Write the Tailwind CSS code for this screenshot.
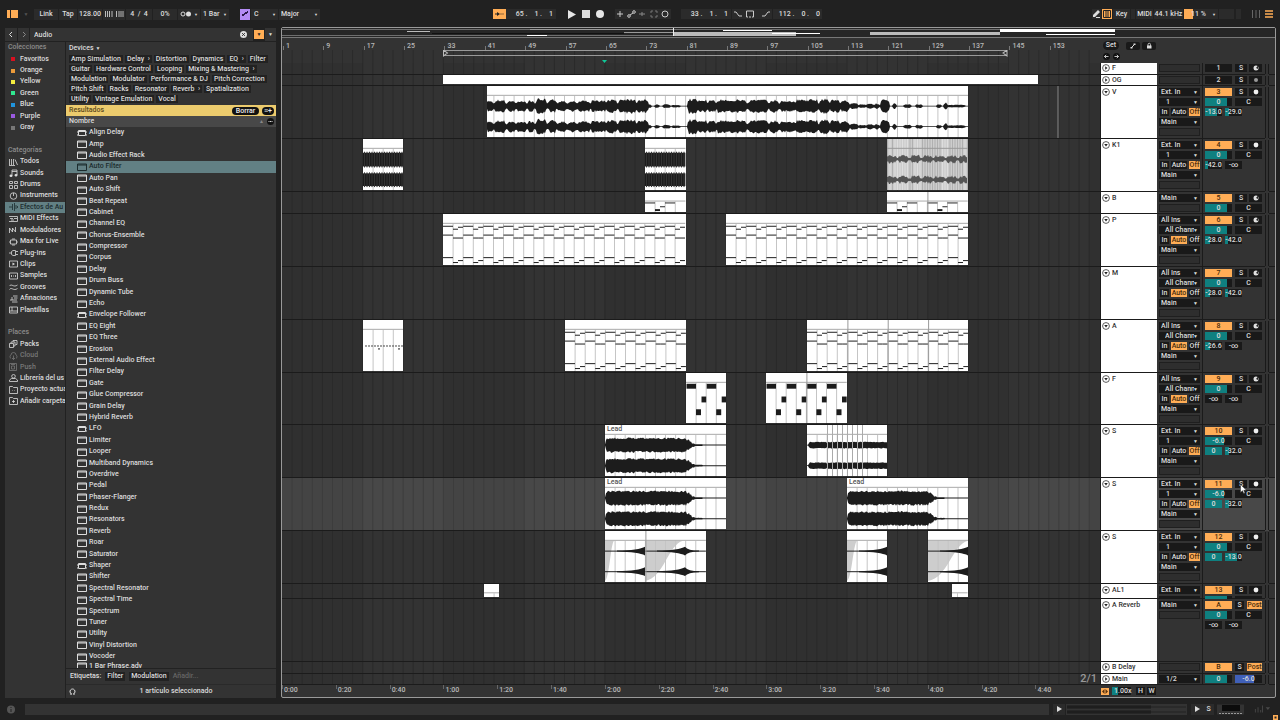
<!DOCTYPE html>
<html lang="es">
<head>
    <meta charset="UTF-8">
    <meta name="viewport" content="width=device-width, initial-scale=1.0">
    <title>Arrangement</title>
    <script src="https://cdn.jsdelivr.net/npm/@tailwindcss/browser@4"></script>
</head>
<body class="h-screen min-h-[720px] flex flex-col overflow-hidden bg-[#212121] text-[#dcdcdc] font-['Roboto','Noto_Sans',sans-serif] text-[7px] leading-[9px] font-medium cursor-default">

    <!-- Barra de control -->
    <header class="flex items-center h-7 shrink-0 pl-[7px] pr-[7px] whitespace-nowrap">
        <div class="flex items-center w-[486px] shrink-0">
            <button aria-label="Ocultar navegador" class="flex gap-px w-[11px] h-2"><span class="w-[3px] h-2 bg-[#ffad56]"></span><span class="flex-1 h-2 bg-[#ffad56]"></span></button>
            <span class="w-4 text-center text-[5px] text-[#555]">▼</span>
            <button class="w-[24px] h-[11px] bg-[#2b2b2b]">Link</button>
            <button class="w-[18px] h-[11px] ml-px bg-[#2b2b2b]">Tap</button>
            <input aria-label="Tempo" value="128.00" class="w-[24px] h-[11px] ml-px bg-[#2b2b2b] text-center">
            <button aria-label="Nudge" class="w-[22px] h-[11px] ml-px bg-[#2b2b2b] flex items-center justify-center">
                <svg class="w-5 h-2" viewBox="0 0 20 8" stroke="#bbb" stroke-width="1"><path d="M1.500 1v6M3.500 1v6M5.500 1v6M8 1v6M12.500 1v6M15 1v6M17 1v6M19 1v6"/></svg>
            </button>
            <input aria-label="Compás" value="4  /  4" class="w-[26px] h-[11px] ml-px bg-[#2b2b2b] text-center">
            <input aria-label="Groove" value="0%" class="w-[24px] h-[11px] ml-px bg-[#2b2b2b] text-center">
            <button aria-label="Metrónomo" class="w-[22px] h-[11px] ml-px bg-[#2b2b2b] flex items-center justify-between px-[2px]">
                <svg class="w-3 h-2" viewBox="0 0 12 8"><circle cx="3" cy="4" r="2" fill="none" stroke="#ddd"/><circle cx="8.500" cy="4" r="2.500" fill="#ddd"/></svg>
                <span class="text-[4px]">▼</span>
            </button>
            <label class="relative ml-px bg-[#2b2b2b] flex items-center h-[11px] w-[28px]">
                <select aria-label="Cuantización" class="appearance-none w-full pl-[2px]"><option>1 Bar</option></select>
                <span class="absolute right-[2px] text-[4px] pointer-events-none">▼</span>
            </label>
            <button aria-label="Escala" class="w-[10px] h-[11px] ml-[11px] bg-[#b48cf5] flex items-center justify-center">
                <svg class="w-2 h-2" viewBox="0 0 8 8" fill="#2a1a4a"><path d="M1 4h2v2H1zM3 3h1v2H3zM4 2h2v2H4zM6 1h1v2H6z"/></svg>
            </button>
            <label class="relative bg-[#2b2b2b] flex items-center h-[11px] w-[27px] ml-px">
                <select aria-label="Nota raíz" class="appearance-none w-full pl-[3px]"><option>C</option></select>
                <span class="absolute right-[2px] text-[4px] pointer-events-none">▼</span>
            </label>
            <label class="relative bg-[#2b2b2b] flex items-center h-[11px] w-[41px] ml-px">
                <select aria-label="Nombre de escala" class="appearance-none w-full pl-[2px]"><option>Major</option></select>
                <span class="absolute right-[2px] text-[4px] pointer-events-none">▼</span>
            </label>
        </div>

        <div class="flex items-center">
            <button aria-label="Seguir" class="w-[13px] h-[10px] bg-[#ffad56] flex items-center justify-center">
                <svg class="w-[9px] h-[6px]" viewBox="0 0 9 6" fill="#222"><path d="M0 2.500h2V1l3 2-3 2V3.500H0zM5.500 2.500h1v1h-1zM7.500 2.500h1v1h-1z"/></svg>
            </button>
            <input aria-label="Posición" value="65 .    1 .    1" class="w-[50px] h-[10px] bg-[#2b2b2b] text-right pr-[3px]">
            <button aria-label="Reproducir" class="ml-[12px]"><svg class="w-2 h-[9px]" viewBox="0 0 8 9" fill="#e6e6e6"><path d="M0 0l8 4.500L0 9z"/></svg></button>
            <button aria-label="Detener" class="ml-[6px] w-2 h-2 bg-[#dcdcdc]"></button>
            <button aria-label="Grabar" class="ml-[6px] w-2 h-2 rounded-full bg-[#e6e6e6]"></button>
            <button aria-label="Overdub y automatización" class="ml-[11px]">
                <svg class="w-[56px] h-[10px] bg-[#2b2b2b]" viewBox="0 0 56 10" fill="none" stroke="#ccc" stroke-width="1">
                    <path d="M2 5h6M5 2v6"/><circle cx="14" cy="7" r="1.300"/><circle cx="19" cy="3" r="1.300"/><path d="M15 6l3-2"/>
                    <path stroke="#888" d="M24 5h6M27 3v4"/><path stroke="#777" d="M36 4V2h2M40 2h2v2M42 6v2h-2M38 8h-2V6"/><circle cx="50" cy="5" r="3"/>
                </svg>
            </button>
            <input aria-label="Inicio de bucle" value="33 .    1 .    1" class="ml-[10px] w-[50px] h-[10px] bg-[#2b2b2b] text-right pr-[3px]">
            <button aria-label="Bucle" class="ml-px">
                <svg class="w-10 h-[10px] bg-[#2b2b2b]" viewBox="0 0 40 10" fill="none" stroke="#ccc" stroke-width="1">
                    <path d="M2 3h2l3 4h3M16 8h-1.500V2h7v6H20M17 8h2M30 7h3l3-4h2"/>
                </svg>
            </button>
            <input aria-label="Duración de bucle" value="112 .    0 .    0" class="ml-px w-[49px] h-[10px] bg-[#2b2b2b] text-right pr-[2px]">
        </div>

        <div class="flex items-center ml-auto">
            <button aria-label="Modo dibujo" class="w-[9px] h-[10px] bg-[#2b2b2b]"><svg class="w-[9px] h-[10px]" viewBox="0 0 9 10" fill="#ddd"><path d="M1 6l4-4 2 2-4 4H1zM6 1l2 2-1 1-2-2zM4 8h4v1H4z"/></svg></button>
            <button aria-label="Teclado MIDI" class="ml-px w-[10px] h-[10px] bg-[#ffad56] flex items-center justify-center">
                <svg class="w-2 h-2" viewBox="0 0 8 8" stroke="#222" fill="none"><path d="M.5.500h7v7h-7zM3 1v6M5 1v6"/></svg>
            </button>
            <button class="w-[17px] h-[10px] ml-px bg-[#2b2b2b]">Key</button>
            <span class="w-[4px] h-[10px] ml-px bg-[#2b2b2b]"></span>
            <button class="w-[17px] h-[10px] ml-px bg-[#2b2b2b]">MIDI</button>
            <button class="w-[29px] h-[10px] ml-px bg-[#2b2b2b]">44.1 kHz</button>
            <button class="w-[34px] h-[10px] ml-px bg-[#2b2b2b] flex items-center"><span class="w-[9px] h-[10px] bg-[#ffad56] shrink-0"></span><span class="-ml-[2px]">11 %</span><span class="text-[4px] ml-auto mr-[2px]">▼</span></button>
            <span class="w-[15px] h-[10px] ml-px bg-[#2b2b2b]"></span>
            <span class="w-[5px] h-[10px] ml-[2px] bg-[#2b2b2b]"></span>
            <svg class="w-2 h-2 ml-[11px]" viewBox="0 0 8 8" stroke="#666"><path d="M.5 0v8M4 0v8M7.500 0v8"/></svg>
            <button aria-label="Menú" class="ml-[5px]"><svg class="w-2 h-2" viewBox="0 0 8 8" stroke="#ffad56" stroke-width="1.400"><path d="M0 1h8M0 4h8M0 7h8"/></svg></button>
        </div>
    </header>

    <main class="flex flex-1 min-h-0 pl-[5px] pr-[4px]">
        <!-- Navegador -->
        <section class="w-[271px] shrink-0 flex flex-col">
            <div class="flex items-center h-[13px] gap-px shrink-0">
                <button aria-label="Atrás" class="w-3 h-[13px] bg-[#333]"><svg class="w-3 h-[7px]" viewBox="0 0 12 7" fill="none" stroke="#ddd"><path d="M7 1L4.500 3.500 7 6"/></svg></button>
                <button aria-label="Adelante" class="w-[11px] h-[13px] bg-[#333]"><svg class="w-3 h-[7px]" viewBox="0 0 12 7" fill="none" stroke="#888"><path d="M5 1l2.500 2.500L5 6"/></svg></button>
                <input aria-label="Buscar" value="Audio" class="flex-1 min-w-0 h-[13px] bg-[#333] pl-[4px]">
                <button aria-label="Borrar búsqueda" class="w-[13px] h-[13px] bg-[#333] -ml-px"><svg class="w-[7px] h-[7px]" viewBox="0 0 7 7"><circle cx="3.500" cy="3.500" r="3.500" fill="#ddd"/><path d="M2.200 2.200l2.600 2.600M4.800 2.200L2.200 4.800" stroke="#222"/></svg></button>
                <button aria-label="Filtro" class="w-[10px] h-[9px] bg-[#ffad56] text-[5px] leading-[9px] text-[#222]">▼</button>
                <button aria-label="Más filtros" class="w-[11px] h-[13px] bg-[#333] text-[5px]">▼</button>
            </div>
            <div class="flex flex-1 min-h-0 gap-px mt-px">
                <nav id="sidebar" class="w-[60px] shrink-0 bg-[#333] overflow-hidden"></nav>
                <div class="flex-1 min-w-0 flex flex-col bg-[#333]">
                    <div class="h-[63px] shrink-0 pt-px">
                        <button class="pl-[3px] h-[10px] flex items-center gap-[2px]">Devices <span class="text-[5px]">▼</span></button>
                        <div id="tags" class="pl-[3px] mt-[2px] flex flex-col gap-[2px]"></div>
                    </div>
                    <div class="h-[11px] shrink-0 flex items-center bg-[#eccb6d] text-[#5b4a1c] pl-[3px] pr-[2px]">
                        Resultados
                        <button class="ml-auto h-2 w-[27px] rounded-full bg-[#111] text-[#eee] leading-[8px]">Borrar</button>
                        <button aria-label="Añadir etiqueta" class="ml-[3px] h-2 w-3 rounded-full bg-[#111] text-[#eee] leading-[8px]">≡+</button>
                    </div>
                    <div class="h-[11px] shrink-0 flex items-center bg-[#484848] pl-[3px] pr-[2px]">
                        Nombre <span class="ml-auto mr-[3px] text-[5px] text-[#888]">▲</span>
                        <button aria-label="Columnas" class="w-[7px] h-[7px] rounded-full bg-[#111]"><svg class="w-[7px] h-[7px]" viewBox="0 0 7 7" fill="#ddd"><path d="M1.500 3h1v1h-1zM3 3h1v1H3zM4.500 3h1v1h-1z"/></svg></button>
                    </div>
                    <ul id="devices" class="flex-1 min-h-0 flex flex-col overflow-hidden"></ul>
                    <div class="h-[16px] shrink-0 flex items-center gap-[4px] pl-[4px] border-t border-[#222]">
                        Etiquetas: <button class="bg-[#222] px-[2px]">Filter</button><button class="bg-[#222] px-[2px]">Modulation</button><span class="text-[#666]">Añadir...</span>
                    </div>
                    <div class="h-[14px] shrink-0 flex items-center pl-[3px] border-t border-[#2a2a2a]">
                        <svg class="w-[7px] h-[7px]" viewBox="0 0 7 7" fill="none" stroke="#ddd"><path d="M2.500 5.800A2.500 2.500 0 1 1 4.500 5.800M1 6h2M4 6h2"/></svg>
                        <span class="flex-1 text-center">1 artículo seleccionado</span>
                    </div>
                </div>
            </div>
        </section>

        <!-- Arreglo -->
        <section class="flex-1 min-w-0 ml-[5px] -mt-px flex flex-col bg-[#333] border border-[#9a9a9a] rounded-[2px]">
            <svg class="w-full h-[10px] shrink-0 bg-[#262626] border-b border-[#777]" viewBox="0 0 993 9" preserveAspectRatio="none" shape-rendering="crispEdges">
                <path fill="#6e6e6e" d="M0 1h838v1H0zM0 7h391v1H0zM838 1h80v1H838z"/>
                <path fill="#111" d="M150 5h192v1H150z"/>
                <path fill="#999" d="M248 1h143v1H248zM342 4h49v1H342z"/>
                <path fill="#bbb" d="M391 4h123v4H391zM125 3h23v1H125zM588 4h130v3H588z"/>
                <path fill="#fff" d="M441 2h49v1h-49zM490 5h48v1H490zM245 7h20v1H245zM718 1h115v3H718zM764 6h69v1H764z"/>
                <path fill="#eee" d="M391 0h1v8h-1z"/>
            </svg>
            <div class="flex shrink-0 h-[25px]">
                <div class="flex-1 min-w-0 overflow-hidden">
                    <div id="barRuler" class="flex h-[12px] items-end overflow-hidden"></div>
                    <svg id="brace" class="block w-full h-[13px]"></svg>
                </div>
                <div class="w-[175px] shrink-0 flex flex-col gap-[3px] pt-[3px] pl-[3px]">
                    <div class="flex items-center">
                        <button class="w-[16px] h-[9px] rounded-full bg-[#191919]">Set</button>
                        <button aria-label="Automatización" class="ml-[7px] w-[14px] h-2 rounded-[2px] bg-[#191919]"><svg class="w-[14px] h-2" viewBox="0 0 14 8" stroke="#ddd"><path d="M5.500 5.500l3-3"/><path d="M4.500 5h2v1.500h-2zM7.500 1.500h2V3h-2z" fill="#ddd" stroke="none"/></svg></button>
                        <button aria-label="Bloquear envolventes" class="ml-[2px] w-[14px] h-2 rounded-[2px] bg-[#191919]"><svg class="w-[14px] h-2" viewBox="0 0 14 8" fill="#ddd"><path d="M5 3.500h4.500v3H5z"/><path d="M6 4V2.500a1.200 1.200 0 0 1 2.500 0V4" fill="none" stroke="#ddd" stroke-width=".8"/></svg></button>
                    </div>
                    <div class="flex gap-[3px]">
                        <button aria-label="Anterior" class="w-[7px] h-[7px] rounded-full bg-[#111]"><svg class="w-[7px] h-[7px]" viewBox="0 0 7 7" fill="none" stroke="#eee" stroke-width=".8"><path d="M5.500 3.500h-4M3.200 1.800L1.500 3.500l1.700 1.700"/></svg></button>
                        <button aria-label="Siguiente" class="w-[7px] h-[7px] rounded-full bg-[#111]"><svg class="w-[7px] h-[7px]" viewBox="0 0 7 7" fill="none" stroke="#eee" stroke-width=".8"><path d="M1.500 3.500h4M3.800 1.800l1.700 1.700-1.700 1.700"/></svg></button>
                    </div>
                </div>
            </div>
            <div id="tracks" class="flex-1 min-h-0 flex flex-col"></div>
            <div class="flex h-[12px] shrink-0">
                <div id="timeRuler" class="flex-1 min-w-0 flex overflow-hidden"></div>
                <div class="w-[175px] shrink-0 flex items-center gap-[3px] pl-px">
                    <button aria-label="Centrar" class="w-2 h-[7px] bg-[#ffad56]"><svg class="w-2 h-[7px]" viewBox="0 0 8 7" fill="#5a3510"><path d="M1 3.500L3.500 1v5zM7 3.500L4.500 1v5z"/></svg></button>
                    <span class="w-[19px] h-[8px] leading-[8px] bg-[linear-gradient(90deg,#0f8080_6px,#191919_6px)] pl-[2px]">1.00x</span>
                    <button class="ml-[2px] w-[9px] h-2 leading-[8px] bg-[#191919]">H</button>
                    <button class="-ml-px w-[9px] h-2 leading-[8px] bg-[#191919]">W</button>
                </div>
            </div>
        </section>
    </main>

    <!-- Barra de estado -->
    <footer class="flex items-center h-[22px] shrink-0 pl-[7px] pr-[2px]">
        <svg class="w-2 h-[9px]" viewBox="0 0 8 9"><circle cx="4" cy="4.500" r="4" fill="#555"/><path d="M4 2v1M4 4v3" stroke="#222"/></svg>
        <div class="flex-1 h-[11px] ml-[10px] bg-[#333]"></div>
        <button aria-label="Vista de clip" class="ml-[4px] w-3 h-[11px] bg-[#2b2b2b]"><svg class="w-3 h-[6px]" viewBox="0 0 12 6" fill="#ddd"><path d="M4 0l5 3-5 3z"/></svg></button>
        <svg class="ml-px w-[121px] h-[11px] bg-[#333]" viewBox="0 0 121 11"><path d="M1 3h84M1 8h84" stroke="#1a1a1a" stroke-width="3"/><path d="M1 3h119M1 8h119" stroke="#222"/></svg>
        <button aria-label="Vista de dispositivo" class="ml-[4px] w-3 h-[11px] bg-[#2b2b2b]"><svg class="w-3 h-[6px]" viewBox="0 0 12 6" fill="#ddd"><path d="M4 0l5 3-5 3z"/></svg></button>
        <span class="w-[11px] h-[11px] bg-[#2b2b2b] text-center leading-[11px]">S</span>
        <svg class="ml-[3px] w-7 h-[11px]" viewBox="0 0 28 11"><path d="M0 .5h27v10H0z" fill="#333"/><path d="M5 1h18v6H5z" fill="#0c0c0c"/><path d="M2 9.500h24" stroke="#999" stroke-dasharray="2 1"/></svg>
        <svg class="ml-[9px] w-[17px] h-[8px]" viewBox="0 0 19 8" fill="#484848"><path d="M1 4h1v4H1zM4 2h1v6H4zM7 5h1v3H7zM9 0h1v8H9zM13 2h5l-2.500 3z"/></svg>
        <svg class="ml-[2px] w-[5px] h-[5px] self-end" viewBox="0 0 5 5"><path d="M0 0h5v5H0z" fill="#ffad56"/><path d="M1.500 1.500h2v2h-2z" fill="#222"/></svg>
    </footer>

    <!-- Puntero -->
    <svg class="fixed left-[1240px] top-[484px] w-[7px] h-[10px]" viewBox="0 0 7 10"><path d="M.5.500v8l2-1.800 1.200 2.800 1.300-.6-1.200-2.600h2.700z" fill="#fff" stroke="#222" stroke-width=".5"/></svg>

    <script>
        const BARS = 162.14      // compases visibles
        const PX = 5.045         // unidades de dibujo por compás
        const pct = bars => (bars / BARS * 100) + '%'

        // ---------- Navegador ----------
        const colors = [['Favoritos', '#d81020'], ['Orange', '#ea9a3a'], ['Yellow', '#f5ee40'], ['Green', '#30e890'], ['Blue', '#2094dc'], ['Purple', '#9a5ae0'], ['Gray', '#777']]
        const icons = {
            Todos: '<path d="M.5 1v6M2.500 1v6M4.500 1v6M6 1.500L8.500 7M0 7.500h6"/>',
            Sounds: '<path d="M3 6.500V1h5v5M3 2.500h5"/><path fill="currentColor" d="M1 6h2v1.500H1zM6 5.500h2V7H6z"/>',
            Drums: '<path d="M.5.500h3v2h-3zM5.500.500h3v2h-3zM.5 4.500h3v3h-3zM5.500 4.500h3v3h-3z"/>',
            Instruments: '<circle cx="4.500" cy="4" r="3.300"/><path d="M4.500 1v3"/>',
            'Efectos de Au': '<path d="M0 4h1M2 3v2M3.500 1v6M5.500 0v8M7 2v4M8.500 3v2"/>',
            'MIDI Effects': '<path d="M0 1.500h8.500v5H0M1 3.500h3M5 3.500h3M2 5h3"/>',
            Moduladores: '<path d="M.5 7V2l3 4V2l3 4V1"/>',
            'Max for Live': '<path d="M1.500 2h6v4h-6zM0 4h1M8 4h1M3 1h3M3 7h3"/>',
            'Plug-Ins': '<path d="M0 4h2M2.500 2.500L4 1.500h2.500v5H4L2.500 5.500zM7 2.500h2M7 5.500h2"/>',
            Clips: '<path d="M.5 1h8v6h-8z"/><path fill="currentColor" stroke="none" d="M3.500 2.500L6 4 3.500 5.500z"/>',
            Samples: '<path d="M.5 1h8v6h-8zM2.500 3v2M4 4h1M6.500 3v2"/>',
            Grooves: '<path d="M.5 3c2-3 4 2 8-1M.5 6.500c2-3 4 2 8-1"/>',
            Afinaciones: '<path d="M4 1h4.500M5 3h3.500M1 5h3M4 5h4M3 7h5.500M3 2v3"/>',
            Plantillas: '<path d="M.5 1h8v6h-8zM.5 5h8M3 1v4"/>',
            Packs: '<path d="M.5 3.500h4v4h-4zM2 3V2h4v4H5M4 2V.5h4v4H6.500"/>',
            Cloud: '<path d="M2 6.500a2 2 0 0 1 0-3.500 2.500 2.500 0 0 1 5 0 2 2 0 0 1 0 3.500M4.500 3.500v4M3 6l1.500 1.500L6 6"/>',
            Push: '<path d="M.5.500h7v7h-7zM2.500 3h3v3h-3zM2 1.500h4"/>',
            'Librería del us': '<circle cx="4.500" cy="2.300" r="1.800"/><path d="M.5 7.500V6l2-1.500h4l2 1.500v1.500z"/>',
            'Proyecto actua': '<path d="M.5 7.500v-7h3l1 1h4v6zM3 4.500h.5M5.500 4.500H6"/>',
            'Añadir carpeta': '<path d="M.5 7.500v-7h3l1 1h4v6zM3 4.500h3M4.500 3v3"/>'
        }
        const heading = t => `<div class="text-[#8c8c8c] pl-[3px] flex items-center">${t}</div>`
        const place = t => {
            const active = t === 'Efectos de Au'
            const dim = t === 'Cloud' || t === 'Push'
            const tone = active ? 'bg-[#628084] text-[#1c2c2e]' : dim ? 'text-[#777]' : 'text-[#dcdcdc]'
            return `<a href="#" class="flex items-center pl-[4px] pr-[4px] whitespace-nowrap ${tone}"><svg class="w-[9px] h-2 shrink-0" viewBox="0 0 9 8" fill="none" stroke="currentColor" stroke-width=".8">${icons[t]}</svg><span class="ml-[2px] overflow-hidden">${t}</span></a>`
        }
        const names = Object.keys(icons)
        document.getElementById('sidebar').innerHTML = '<div class="grid auto-rows-fr h-[365px]">' +
            heading('Colecciones') +
            colors.map(([t, c]) => `<a href="#" class="flex items-center pl-[6px]"><span class="w-1 h-1" style="background:${c}"></span><span class="ml-[5px]">${t}</span></a>`).join('') +
            '<div></div>' + heading('Categorías') + names.slice(0, 14).map(place).join('') +
            '<div></div>' + heading('Places') + names.slice(14).map(place).join('') + '</div>'

        const tags = [
            ['Amp Simulation', 'Delay  ›', 'Distortion', 'Dynamics', 'EQ  ›', 'Filter'],
            ['Guitar', 'Hardware Control', 'Looping', 'Mixing &amp; Mastering  ›'],
            ['Modulation', 'Modulator', 'Performance &amp; DJ', 'Pitch Correction'],
            ['Pitch Shift', 'Racks', 'Resonator', 'Reverb  ›', 'Spatialization'],
            ['Utility', 'Vintage Emulation', 'Vocal']
        ]
        document.getElementById('tags').innerHTML = tags.map(r => '<div class="flex gap-[2px] h-2">' +
            r.map(t => `<button class="bg-[#222] px-[2px] leading-[8px] whitespace-pre">${t}</button>`).join('') + '</div>').join('')

        const devices = ['Align Delay', 'Amp', 'Audio Effect Rack', 'Auto Filter', 'Auto Pan', 'Auto Shift', 'Beat Repeat', 'Cabinet', 'Channel EQ', 'Chorus-Ensemble', 'Compressor', 'Corpus', 'Delay', 'Drum Buss', 'Dynamic Tube', 'Echo', 'Envelope Follower', 'EQ Eight', 'EQ Three', 'Erosion', 'External Audio Effect', 'Filter Delay', 'Gate', 'Glue Compressor', 'Grain Delay', 'Hybrid Reverb', 'LFO', 'Limiter', 'Looper', 'Multiband Dynamics', 'Overdrive', 'Pedal', 'Phaser-Flanger', 'Redux', 'Resonators', 'Reverb', 'Roar', 'Saturator', 'Shaper', 'Shifter', 'Spectral Resonator', 'Spectral Time', 'Spectrum', 'Tuner', 'Utility', 'Vinyl Distortion', 'Vocoder', '1 Bar Phrase.adv']
        const maxDevices = ['Align Delay', 'Envelope Follower', 'LFO', 'Shaper']
        document.getElementById('devices').innerHTML = devices.map((t, i) => {
            const tone = t === 'Auto Filter' ? 'bg-[#628084] text-[#1c2c2e]' : 'text-[#dcdcdc]'
            const size = i === devices.length - 1 ? 'h-[6px] shrink-0 items-start' : 'flex-1 min-h-0 items-center'
            const icon = maxDevices.includes(t)
                ? '<path d="M1.500 1.500h7v5h-7zM1 2.500h8M0 3h1M9 3h1M0 6h1M9 6h1"/>'
                : '<path d="M.5 1h9v6.500h-9zM.5 2h9"/>'
            return `<li class="flex pl-[11px] overflow-hidden whitespace-nowrap ${size} ${tone}"><svg class="w-[10px] h-2 shrink-0" viewBox="0 0 10 8" fill="none" stroke="currentColor">${icon}</svg><span class="ml-[2px]">${t}</span></li>`
        }).join('')

        // ---------- Reglas ----------
        let ruler = ''
        for (let b = 1; b < 160; b += 8) ruler += `<span class="shrink-0 h-[9px] pl-px flex items-end gap-[2px] leading-[8px] text-[#b8b8b8]" style="width:${pct(8)}"><i class="w-px h-[4px] bg-[#777]"></i>${b < 154 ? b : ''}</span>`
        document.getElementById('barRuler').innerHTML = ruler

        const W = BARS * PX
        const gridLines = (from, to, h, color, y = 0) => {
            let d = ''
            for (let b = Math.ceil((from - 1) / 2) * 2 + 1; b < to; b += 2) if (b > from) d += `M${((b - from) * PX).toFixed(1)} ${y}V${h}`
            return `<path d="${d}" stroke="${color}"/>`
        }
        const shade = (h, color) => {
            let s = ''
            for (let b = 1; b < BARS; b += 32) s += `<rect x="${(b - 1) * PX}" width="${16 * PX}" height="${h}" fill="${color}"/>`
            return s
        }
        const brace = document.getElementById('brace')
        brace.setAttribute('viewBox', `0 0 ${W} 13`)
        brace.setAttribute('preserveAspectRatio', 'none')
        brace.innerHTML = gridLines(1, BARS, 13, '#2b2b2b') +
            '<path d="M161 .5h564M161 5.500h564" stroke="#999"/><path d="M161.500 0v6l4-3zM725 0v6l-4-3z" fill="#333" stroke="#bbb"/><path d="M320 10h5l-2.500 3z" fill="#10c898"/>'

        let times = ''
        for (let s = 0; s <= 280; s += 20) times += `<span class="shrink-0 border-l border-[#666] h-1 pl-px text-[#b8b8b8] leading-[10px]" style="width:${pct(32 / 3)}">${Math.floor(s / 60)}:${String(s % 60).padStart(2, '0')}</span>`
        document.getElementById('timeRuler').innerHTML = times

        // ---------- Formas de onda ----------
        let seed = 7
        const rnd = () => (seed = (seed * 16807) % 2147483647) / 2147483647
        // segs: [inicio, fin, amplitud, sin suavizar] en unidades de dibujo
        function wave(w, segs, centers, color = '#1c1c1c', base = 0.4, jitter = 0.35) {
            const up = [], down = []
            for (let x = 0; x <= w; x += 1) {
                const s = segs.find(s => x >= s[0] && x <= s[1])
                let a = base, b = base
                if (s) {
                    const edge = s[3] ? 1 : Math.min(1, (Math.min(x - s[0], s[1] - x) + 2) / 3)
                    a = s[2] * edge * (1 - jitter * rnd())
                    b = s[2] * edge * (1 - jitter * rnd())
                }
                up.push([x, a]); down.unshift([x, b])
            }
            return centers.map(c => `<path fill="${color}" d="M${up.map(p => p[0] + ' ' + (c + .5 - p[1]).toFixed(1)).join('L')}L${down.map(p => p[0] + ' ' + (c + .5 + p[1]).toFixed(1)).join('L')}z"/>`).join('')
        }
        const vocals = [[487,493,6],[495,505,7],[508,515,6],[517,526,6],[528,534,6],[536,546,8],[549,556,7],[558,566,6],[569,576,6],[578,590,6],[591,606,6],[607,617,7],[619,636,8],[637,648,7],[648,651,2],[655,659,2],[663,670,2],[672,680,1.5],[688,697,8],[698,707,7],[708,716,6],[717,746,7],[749,768,7],[770,778,7],[780,795,6],[796,818,7],[820,829,8],[830,840,7],[841,849,6],[850,858,3],[859,866,2],[867,873,3],[875,879,3],[881,889,7],[893,896,3],[904,911,2],[916,922,2],[937,941,2],[944,947,4],[948,965,1.5],[487,648,3.5,1],[688,849,3.5,1],[849,881,1.5,1]].map(s => [s[0] - 487, s[1] - 487, s[2], s[3]])
        const lead = w => wave(w, [[1, 82, 7.8], [83, 84, 6, 1], [85, 86, 4, 1], [87, 89, 2, 1], [90, 97, 1, 1]], [20, 41], '#1c1c1c', 0.5, 0.25)
        const rect = (x, y, w, h, c = '#1c1c1c') => `<rect x="${x.toFixed(1)}" y="${y}" width="${w.toFixed(1)}" height="${h}" fill="${c}"/>`

        function spikes(w) {
            let s = rect(0, 14, w, 14) + rect(0, 35, w, 13)
            for (let x = 1; x < w; x += 2.5) s += rect(x, 13, 1, 16, '#333') + rect(x, 34, 1, 15, '#333')
            return s
        }
        function chords(w) {
            let s = ''
            for (let x = 0; x < w - 1; x += 4 * PX) s += [[0,12,10],[0,21,10],[0,44,10],[10,15,5],[10,24,5],[10,49,5],[15,13,5],[15,24,5],[15,47,5]].map(n => rect(x + n[0], n[1], n[2], 1)).join('')
            return s
        }
        function bass(w) {
            let s = ''
            for (let x = 0; x < w - 1; x += 8 * PX) s += rect(x, 11, 10, 1) + rect(x + 10, 18, 5, 2) + rect(x + 15, 15, 5, 1) + rect(x + 20, 11, 10, 1)
            return s
        }
        function blocks(w) {
            let s = ''
            for (let x = 0; x < w - 1; x += 4 * PX) s += rect(x + .5, 11, 9.5, 5) + rect(x + 10, 37, 5, 6) + rect(x + 15.5, 24, 4.700, 6)
            return s
        }
        function dots(w) {
            let s = ''
            for (let x = 2; x < w - 2; x += 3) s += rect(x, 26, 2, 1, '#444')
            return s + rect(15, 29, 2, 1) + rect(35, 29, 2, 1)
        }
        function texture(w) {
            let s = rect(0, 0, w, 52, '#cdcdcd')
            for (let x = 0; x < w; x += 2.5) s += rect(x, 0, 1, 52, rnd() > .5 ? '#b0b0b0' : '#dedede')
            const segs = []
            for (let x = 0; x < w; x += 12) segs.push([x, x + 9, 4.5])
            return s + rect(0, 9, w, 1, '#999') + wave(w, segs, [20, 41], '#555', 1.2, 0.6)
        }
        function chopped(w) {
            let s = wave(w, [[2, 20, 3.5], [21, 80, 3.5, 1]], [20, 41], '#1c1c1c', 0.4, 0.2)
            for (let x = 20; x < 57; x += 5) s += rect(x, 0, 1, 52, '#aaa')
            return s
        }
        // golpes invertidos; peaks: posición del pico y si decae después
        function swell(peaks) {
            return w => {
                let s = ''
                for (const c of [20, 41]) {
                    s += rect(0, c, w, 1)
                    for (const [p, after] of peaks) {
                        s += `<path fill="#1c1c1c" d="M${p - 28} ${c}Q${p - 6} ${c - .5} ${p} ${c - 4}V${c + 5}Q${p - 6} ${c + 1.5} ${p - 28} ${c + 1}z"/>`
                        if (after) s += `<path fill="#1c1c1c" d="M${p} ${c - 4}Q${p + 3} ${c} ${p + 14} ${c}v1Q${p + 3} ${c + 1} ${p} ${c + 5}z"/>`
                    }
                }
                return s
            }
        }
        const fade = (x, w) => `<path fill="#cdcdcd" d="M${x} 10H${x + w}C${x + w * .6} 14 ${x + w * .5} 48 ${x} 51z"/>`

        // ---------- Clips ----------
        function clip(c, rowH) {
            const w = (c.to - c.from) * PX, h = rowH - 1
            let s = ''
            if (c.under) s += c.under
            if (!c.plain) s += gridLines(c.from, c.to, h, '#c4c4c4', 10) + rect(0, 9, w, 1, '#a8a8a8')
            if (c.draw) s += c.draw(w)
            for (const b of c.splits || []) s += rect((b - c.from) * PX, 0, 1, h, '#999')
            return `<div class="absolute top-0 bottom-px bg-white overflow-hidden" style="left:${pct(c.from - 1)};width:${pct(c.to - c.from)}"><svg class="absolute inset-0 w-full h-full" viewBox="0 0 ${w} ${h}" preserveAspectRatio="none">${s}</svg>${c.name ? `<span class="relative block pl-[2px] text-[#555]">${c.name}</span>` : ''}</div>`
        }

        const ext = ['Ext. In', '1', 'Off'], all = ['All Ins', 'All Channe', 'Auto']
        const tracks = [
            { name: 'F', n: '1', h: 12, folded: true, off: true, rec: 'midi' },
            { name: 'OG', n: '2', h: 11, folded: true, off: true, rec: 'dim', clips: [{ from: 33, to: 150.900, plain: true }] },
            { name: 'V', n: '3', h: 53, io: ext, vol: '0', sends: ['-13.0', '-29.0'], marker: true, clips: [{ from: 41.630, to: 137, draw: w => wave(w, vocals, [20, 41]) }] },
            { name: 'K1', n: '4', h: 53, io: ext, vol: '0', sends: ['-42.0', '-∞'], clips: [{ from: 17, to: 25, draw: spikes }, { from: 73, to: 81, draw: spikes }, { from: 121, to: 137, draw: texture }] },
            { name: 'B', n: '5', h: 22, short: true, vol: '0', rec: 'midi', clips: [{ from: 73, to: 81, draw: bass }, { from: 121, to: 137, draw: bass, splits: [129] }] },
            { name: 'P', n: '6', h: 53, io: all, vol: '0', rec: 'midi', sends: ['-28.0', '-42.0'], clips: [{ from: 33, to: 81, draw: chords }, { from: 89, to: 137, draw: chords }] },
            { name: 'M', n: '7', h: 53, io: all, vol: '0', rec: 'midi', sends: ['-28.0', '-42.0'] },
            { name: 'A', n: '8', h: 53, io: all, vol: '0', rec: 'midi', sends: ['-26.6', '-∞'], clips: [{ from: 17, to: 25, draw: dots }, { from: 57, to: 81, draw: chords }, { from: 105, to: 137, draw: chords, splits: [113, 121, 129] }] },
            { name: 'F', n: '9', h: 52, io: all, vol: '0', rec: 'midi', sends: ['-∞', '-∞'], clips: [{ from: 81, to: 89, draw: blocks }, { from: 97, to: 113, draw: blocks, splits: [105] }] },
            { name: 'S', n: '10', h: 53, io: ext, vol: '-6.0', sends: ['0', '-32.0'], clips: [{ from: 65, to: 89, draw: lead, name: 'Lead' }, { from: 105, to: 121, draw: chopped }] },
            { name: 'S', n: '11', h: 53, io: ext, vol: '-6.0', sends: ['0', '-32.0'], selected: true, clips: [{ from: 65, to: 89, draw: lead, name: 'Lead' }, { from: 113, to: 137, draw: lead, name: 'Lead' }] },
            { name: 'S', n: '12', h: 53, io: ext, vol: '0', sends: ['0', '-13.0'], clips: [
                { from: 65, to: 85, under: fade(0, 9) + fade(40, 38), draw: swell([[40, false], [80, true]]), splits: [73] },
                { from: 113, to: 121, under: fade(0, 10), draw: swell([[40, false]]) },
                { from: 129, to: 137, under: fade(0, 40), draw: swell([[40, false]]) }] },
            { name: 'AL1', n: '13', h: 15, cut: true, clips: [{ from: 41, to: 44.100 }, { from: 133.900, to: 137 }] },
            { name: 'A Reverb', n: 'A', h: 0, short: true, vol: '0', post: true, sends: ['-∞', '-∞'] },
            { name: 'B Delay', n: 'B', h: 12, folded: true, post: true },
            { name: 'Main', h: 11, folded: true, main: true }
        ]

        const drop = (label, v, pad = 'pl-[2px]') => `<label class="relative block h-2 shrink-0 bg-[#191919]"><select aria-label="${label}" class="block appearance-none w-full h-2 leading-[8px] pr-[6px] ${pad}"><option>${v}</option></select><span class="absolute right-[2px] top-0 text-[5px] leading-[8px] pointer-events-none">▼</span></label>`
        const empty = '<div class="h-2 shrink-0 bg-[#2e2e2e] border border-[#1f1f1f]"></div>'

        function ioColumn(t) {
            if (t.main) return drop('Salida', '1/2', 'pl-[7px]')
            if (t.short) return drop('Salida', 'Main') + empty
            if (t.cut) return drop('Entrada', 'Ext. In') + '<div class="h-2 shrink-0 bg-[#191919]"></div>'
            if (!t.io) return empty
            const mode = m => `<button class="h-2 leading-[8px] ${m === t.io[2] ? 'bg-[#ffad56] text-[#4a2c0c]' : 'bg-[#191919]'} ${m === 'In' ? 'w-[9px]' : m === 'Auto' ? 'w-[16px]' : 'w-[11px]'}">${m}</button>`
            return drop('Entrada', t.io[0]) + drop('Canal', t.io[1], t.io[2] === 'Auto' ? 'pl-[6px]' : 'pl-[7px]') +
                `<div class="flex justify-between h-2 shrink-0 pl-px">${['In', 'Auto', 'Off'].map(mode).join('')}</div>` + drop('Salida', 'Main') + empty
        }
        const recIcon = {
            midi: '<circle cx="4" cy="4" r="2.500" fill="#e0e0e0"/><path d="M4 4l2-2.500v3.500z" fill="#222"/>',
            dim: '<circle cx="4" cy="4" r="2" fill="#999"/>',
            audio: '<circle cx="4" cy="4" r="2.400" fill="#f0f0f0"/>'
        }
        function send(v) {
            const fill = { '0': 17, '-13.0': 12, '-29.0': 4, '-42.0': 3, '-28.0': 5, '-26.6': 5, '-32.0': 4 }[v] || 0
            return `<span class="w-[17px] h-2 leading-[8px] text-center" style="background:linear-gradient(90deg,#0f8080 ${fill}px,#191919 ${fill}px)">${v}</span>`
        }
        function mixColumn(t) {
            if (t.main) return '<div class="flex gap-[3px]"><span class="w-[27px] h-2 leading-[8px] text-center bg-[linear-gradient(90deg,#0f8080_22px,#191919_22px)]">0</span><span class="w-[27px] h-2 leading-[8px] text-center bg-[linear-gradient(90deg,#4060b8_19px,#191919_19px)]">-6.0</span></div>'
            const num = t.off ? 'bg-[#191919] text-[#dcdcdc]' : 'bg-[#ffad56] text-[#4a2c0c]'
            let s = `<div class="flex h-2 shrink-0"><button class="w-[27px] leading-[8px] ${num}">${t.n}</button>`
            s += t.post
                ? '<button class="w-[9px] ml-[3px] leading-[8px] bg-[#191919]">S</button><button class="w-[15px] ml-[3px] leading-[8px] bg-[#ffad56] text-[#4a2c0c]">Post</button></div>'
                : `<button class="w-[12px] ml-[3px] leading-[8px] bg-[#191919]">S</button><button aria-label="Armar ${t.n}" class="w-[13px] ml-[2px] flex justify-center bg-[#191919]"><svg class="w-2 h-2" viewBox="0 0 8 8">${recIcon[t.rec || 'audio']}</svg></button></div>`
            if (t.cut) s += '<div class="flex gap-[3px] h-2 shrink-0"><span class="w-[27px] bg-[linear-gradient(90deg,#0f8080_22px,#191919_22px)]"></span><span class="w-[27px] bg-[#191919]"></span></div>'
            if (t.vol) s += `<div class="flex gap-[3px] h-2 shrink-0"><span class="w-[27px] leading-[8px] text-center ${t.vol === '0' ? 'bg-[linear-gradient(90deg,#0f8080_22px,#191919_22px)]' : 'bg-[linear-gradient(90deg,#0f8080_19px,#191919_19px)]'}">${t.vol}</span><span class="w-[27px] leading-[8px] text-center bg-[#191919]">C</span></div>`
            if (t.sends) s += `<div class="flex gap-[3px] h-2 shrink-0">${t.sends.map(send).join('')}</div>`
            return s
        }

        document.getElementById('tracks').innerHTML = tracks.map(t => {
            const size = t.h ? 'shrink-0' : 'flex-1 min-h-0'
            const bg = t.selected ? 'bg-[#484848]' : 'bg-[#333]'
            const h = t.h || 63
            const arrow = t.folded ? 'M3.200 2.200L5.500 4 3.200 5.800z' : 'M2.200 3h3.600L4 5.500z'
            const pad = t.h && t.h < 13 ? 'pt-px' : 'pt-[2px]'
            return `<div class="flex ${size} ${bg} overflow-hidden" style="${t.h ? `height:${t.h}px` : ''}">
                <div class="flex-1 min-w-0 relative border-b border-[#1b1b1b] overflow-hidden">
                    <svg class="absolute inset-0 w-full h-full" viewBox="0 0 ${W} ${h}" preserveAspectRatio="none">${shade(h, t.selected ? '#444' : '#303030')}${gridLines(1, BARS, h, t.selected ? '#3c3c3c' : '#2a2a2a')}${t.marker ? `<path d="M776 0V${h}" stroke="#888"/>` : ''}</svg>
                    ${(t.clips || []).map(c => clip(c, h)).join('')}
                    ${t.main ? '<span class="absolute right-[3px] bottom-0 text-[11px] leading-[11px] text-[#999]">2/1</span>' : ''}
                </div>
                <div class="w-[57px] shrink-0 border-l border-b border-[#1b1b1b] bg-white text-[#333] ${pad} flex items-start pl-px">
                    <svg class="w-2 h-2 shrink-0" viewBox="0 0 8 8"><circle cx="4" cy="4" r="3.400" fill="none" stroke="#333" stroke-width=".8"/><path d="${arrow}" fill="#222"/></svg>
                    <span class="ml-[2px] leading-[8px]">${t.name}</span>
                </div>
                <div class="w-[46px] shrink-0 border-b border-r border-[#1b1b1b] ${pad} pl-[2px] pr-[2px] flex flex-col gap-[2px]">${ioColumn(t)}</div>
                <div class="w-[62px] shrink-0 border-b border-[#1b1b1b] ${pad} pl-[2px] flex flex-col gap-[2px]">${mixColumn(t)}</div>
                <div class="w-[4px] shrink-0 border-x border-[#191919] my-px"></div>
                <div class="w-[6px] shrink-0 border-b border-[#1b1b1b]"></div>
            </div>`
        }).join('')
    </script>
</body>
</html>
